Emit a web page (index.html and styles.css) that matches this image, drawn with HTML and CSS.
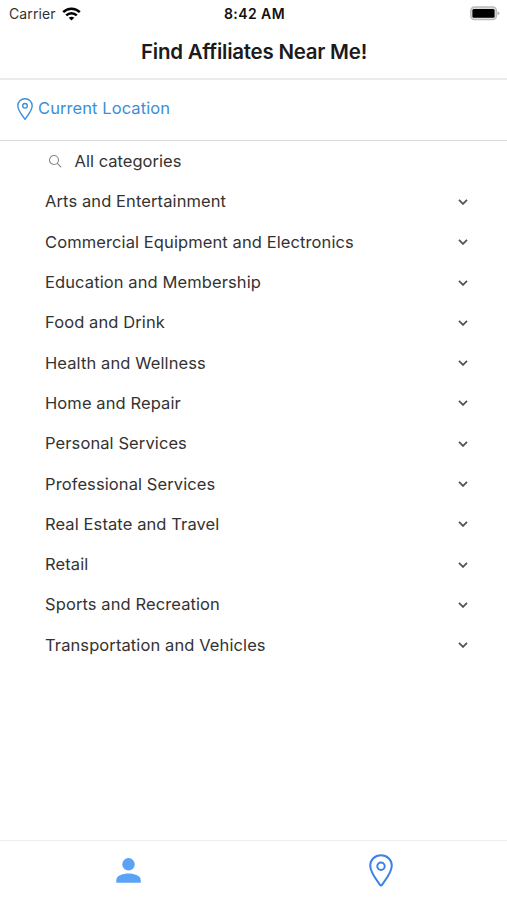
FILE: index.html
```html
<!DOCTYPE html>
<html lang="en">
<head>
<meta charset="utf-8">
<title>Find Affiliates Near Me!</title>
<link rel="stylesheet" href="styles.css">
</head>
<body>
<div class="app">
  <div class="status">
    <div class="carrier"><span>Carrier</span>
      <svg class="wifi" viewBox="0 0 19 14" width="19" height="14" fill="none" stroke="#000" stroke-width="2.5"><path d="M1.2 5.1C5.8.5 13.2.5 17.8 5.1"/><path d="M4.2 8.3c3-2.9 7.6-2.9 10.6 0"/><path d="M9.5 13.5 6.7 10.7c1.5-1.4 4.1-1.4 5.6 0z" fill="#000" stroke="none"/></svg>
    </div>
    <span class="time">8:42 AM</span>
    <svg class="battery" viewBox="0 0 31 15" width="31" height="15"><rect x="1.8" y="1" width="25.6" height="12.6" rx="3.6" fill="#ddd" stroke="#bbb" stroke-width="1.4"/><rect x="3.4" y="2.900" width="22.200" height="8.800" rx="1.500" fill="#000"/><path d="M28.600 5.200q3.600 2.100 0 4.200z" fill="#aaa"/></svg>
  </div>
  <header class="header"><h1>Find Affiliates Near Me!</h1></header>
  <div class="location">
    <svg viewBox="0 0 16 22" width="16" height="22" fill="none" stroke="#3c8fd6" stroke-width="1.4"><path d="M8 .8C4 .8.8 3.8.8 7.8c0 4.6 4.6 10 7.2 13.400 2.600-3.400 7.200-8.800 7.200-13.400C15.200 3.800 12 .8 8 .8z" stroke-linejoin="round"/><circle cx="8" cy="7.800" r="2.300"/></svg>
    <span>Current Location</span>
  </div>
  <main class="list">
    <div class="row all"><svg viewBox="0 0 14 14" width="14" height="14" fill="none" stroke="#858585" stroke-width="1.1" stroke-linecap="round"><circle cx="6" cy="6" r="4.500"/><path d="m9.400 9.400 3.400 3.400"/></svg><span>All categories</span></div>
    <div class="row"><span>Arts and Entertainment</span><svg class="chevron" viewBox="0 0 10 6"><path d="m1 .900 4 4 4-4"/></svg></div>
    <div class="row"><span>Commercial Equipment and Electronics</span><svg class="chevron" viewBox="0 0 10 6"><path d="m1 .900 4 4 4-4"/></svg></div>
    <div class="row"><span>Education and Membership</span><svg class="chevron" viewBox="0 0 10 6"><path d="m1 .900 4 4 4-4"/></svg></div>
    <div class="row"><span>Food and Drink</span><svg class="chevron" viewBox="0 0 10 6"><path d="m1 .900 4 4 4-4"/></svg></div>
    <div class="row"><span>Health and Wellness</span><svg class="chevron" viewBox="0 0 10 6"><path d="m1 .900 4 4 4-4"/></svg></div>
    <div class="row"><span>Home and Repair</span><svg class="chevron" viewBox="0 0 10 6"><path d="m1 .900 4 4 4-4"/></svg></div>
    <div class="row"><span>Personal Services</span><svg class="chevron" viewBox="0 0 10 6"><path d="m1 .900 4 4 4-4"/></svg></div>
    <div class="row"><span>Professional Services</span><svg class="chevron" viewBox="0 0 10 6"><path d="m1 .900 4 4 4-4"/></svg></div>
    <div class="row"><span>Real Estate and Travel</span><svg class="chevron" viewBox="0 0 10 6"><path d="m1 .900 4 4 4-4"/></svg></div>
    <div class="row"><span>Retail</span><svg class="chevron" viewBox="0 0 10 6"><path d="m1 .900 4 4 4-4"/></svg></div>
    <div class="row"><span>Sports and Recreation</span><svg class="chevron" viewBox="0 0 10 6"><path d="m1 .900 4 4 4-4"/></svg></div>
    <div class="row"><span>Transportation and Vehicles</span><svg class="chevron" viewBox="0 0 10 6"><path d="m1 .900 4 4 4-4"/></svg></div>
  </main>
  <nav class="tabs">
    <div class="tab"><svg viewBox="0 0 25 26" width="25" height="26" fill="#5ba1f4"><circle cx="12.500" cy="6.300" r="6.200"/><path d="M.3 24.800v-2.500c0-4.500 6-6.700 12.200-6.700s12.200 2.200 12.200 6.700v2.500z"/></svg></div>
    <div class="tab"><svg viewBox="0 0 24 33" width="24" height="33" fill="none" stroke="#3d80e8" stroke-width="2"><path d="M12 1.200C5.900 1.200 1.200 5.800 1.200 11.600c0 7 6.400 14.600 9.800 19.200.6.800 1.400.8 2 0 3.400-4.600 9.800-12.200 9.800-19.200C22.800 5.800 18.100 1.200 12 1.200z"/><circle cx="12" cy="12.200" r="3.700"/></svg></div>
  </nav>
</div>
</body>
</html>
```
FILE: styles.css
```css
* { box-sizing: border-box; }
body { margin: 0; background: #fff; font-family: Inter, "Liberation Sans", sans-serif; color: #333; }
.app { display: flex; flex-direction: column; width: 507px; height: 900px; }
.status { display: grid; grid-template-columns: 1fr auto 1fr; align-items: center; height: 27px; padding: 0 7px 0 9px; color: #333; font-size: 14px; }
.carrier { display: flex; align-items: center; gap: 6px; letter-spacing: .1px; }
.time { font-weight: 600; color: #111; letter-spacing: .42px; }
.battery { justify-self: end; }
.header { display: flex; align-items: center; justify-content: center; height: 53px; padding: 0 0 2px 1px; border-bottom: 2px solid #ebebeb; }
h1 { margin: 0; font-size: 20.5px; font-weight: 600; color: #1b1b1b; letter-spacing: -.25px; }
.location { display: flex; align-items: center; gap: 5px; height: 61px; padding: 0 17px 4px; border-bottom: 1px solid #dcdcdc; color: #3c8fd6; font-size: 16.5px; letter-spacing: .08px; }
.location svg { position: relative; top: 1px; }
.list { flex: 1; }
.row { display: flex; align-items: center; justify-content: space-between; height: 40.3px; padding: 0 39px 0 45px; font-size: 16.5px; letter-spacing: .1px; }
.all { justify-content: flex-start; gap: 12.5px; padding-left: 48px; letter-spacing: .03px; }
.chevron { width: 10px; height: 6px; margin-top: 1px; fill: none; stroke: #555; stroke-width: 1.8; }
.tabs { display: grid; grid-template-columns: 1fr 1fr; height: 60px; border-top: 1px solid #eee; padding-left: 2px; }
.tab { display: flex; align-items: center; justify-content: center; }
```
